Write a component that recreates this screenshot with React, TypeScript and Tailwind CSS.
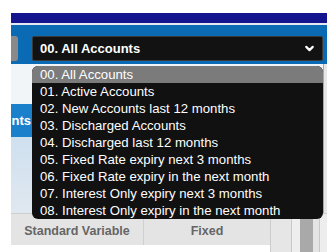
import { ChevronDown } from 'lucide-react';

const options = [
  '00. All Accounts',
  '01. Active Accounts',
  '02. New Accounts last 12 months',
  '03. Discharged Accounts',
  '04. Discharged last 12 months',
  '05. Fixed Rate expiry next 3 months',
  '06. Fixed Rate expiry in the next month',
  '07. Interest Only expiry next 3 months',
  '08. Interest Only expiry in the next month',
];

function AccountSelect() {
  return (
    <div className="ml-[14px] w-[291px] h-[25px] bg-[#121212] border border-[#3a3a3a] rounded-[2px] flex items-center justify-between pl-[7px] pr-[6px]">
      <span className="text-white font-bold text-[13px] leading-none">00. All Accounts</span>
      <ChevronDown className="w-[13px] h-[13px] text-white" strokeWidth={4} />
    </div>
  );
}

function OptionList() {
  return (
    <ul className="absolute left-[32px] top-[66px] w-[291px] bg-[#111111] rounded-[6px] overflow-hidden">
      {options.map((opt, i) => (
        <li
          key={opt}
          className={
            'h-[17px] leading-[17px] pl-[8px] text-[13.2px] text-white whitespace-nowrap ' +
            (i === 0 ? 'bg-[#7b7b7b]' : '')
          }
        >
          {opt}
        </li>
      ))}
    </ul>
  );
}

export default function App() {
  return (
    <div className="relative w-[336px] h-[252px] bg-white overflow-hidden font-['Liberation_Sans',Arial,sans-serif]">
      <div className="ml-[11px] w-[316px] h-full pt-[13px] flex flex-col">
        <div className="h-[10px] bg-[#14148f]" />
        <div className="h-[2px] bg-[#e4e8f0]" />
        <div className="h-[39px] bg-[#0b6ab4] flex items-start pt-[11px]">
          <div className="w-[7px] h-[25px] bg-[#8a8a8a] rounded-r-[3px]" />
          <AccountSelect />
        </div>

        {/* page body behind the open menu */}
        <div className="h-[149px] flex">
          <div className="w-[21px] flex flex-col">
            <div className="h-[40px] bg-[#f2f5f8]" />
            <div className="h-[33px] bg-[#1b80cc] flex items-center justify-end pr-[1px]">
              <span className="text-white font-bold text-[13px] leading-none">nts</span>
            </div>
            <div className="flex-1 bg-gradient-to-b from-[#cfe0ef] to-[#e0e8f0]" />
          </div>
          <div className="flex-1 bg-[#f2f5f8]" />
          <div className="w-[4px] flex">
            <div className="w-[1px] bg-[#a8a8a8]" />
            <div className="flex-1 bg-[#e6e6e6]" />
          </div>
        </div>

        <div className="flex-1 flex">
          <div className="w-[259px] flex flex-col">
            <div className="h-[32px] bg-[#e4e4e4] border-t border-[#cfcfcf] flex text-[12.5px] font-bold text-[#666666]">
              <div className="w-[132px] flex items-center justify-center pt-[3px]">Standard Variable</div>
              <div className="flex-1 border-l border-[#d0d0d0] flex items-center justify-center pt-[3px]">Fixed</div>
            </div>
            <div className="flex-1 bg-white" />
          </div>
          <div className="flex-1 flex border-t border-[#cfcfcf]">
            <div className="w-[21px] bg-[#e6e6e6] border-l border-[#cccccc]" />
            <div className="w-[9px] bg-[#eeeeee] border-l border-[#c8c8c8]" />
            <div className="w-[13px] bg-[#a9a9a9]" />
            <div className="w-[6px] bg-[#e4e4e4]" />
            <div className="flex-1 bg-[#ededed] border-l border-[#c8c8c8]" />
          </div>
        </div>
      </div>

      <OptionList />
    </div>
  );
}
